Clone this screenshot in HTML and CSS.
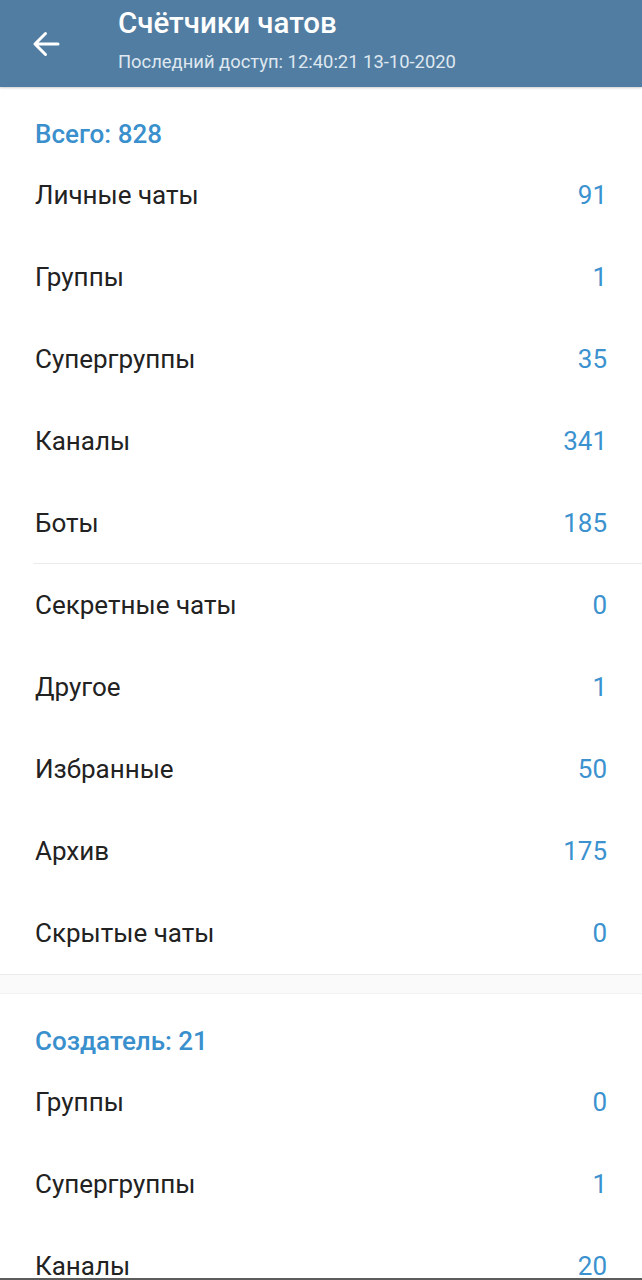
FILE: index.html
```html
<!DOCTYPE html>
<html lang="ru">
<head>
    <meta charset="utf-8"/>
    <title>Счётчики чатов</title>
    <link rel="stylesheet" href="styles.css">
</head>
<body>
<div class="screen">
    <div class="topBar">
        <div class="backButton">
            <svg width="30" height="30" viewBox="0 0 30 30">
                <path d="M27 15H4M4 15L14.5 4.5M4 15L14.5 25.5" fill="none" stroke="#ffffff" stroke-width="3" stroke-linecap="round" stroke-linejoin="round"/>
            </svg>
        </div>
        <div class="titles">
            <div class="title">Счётчики чатов</div>
            <div class="subtitle">Последний доступ: 12:40:21 13-10-2020</div>
        </div>
    </div>

    <div class="section">
        <div class="sectionTitle">Всего: 828</div>
        <div class="row"><span>Личные чаты</span><span class="value">91</span></div>
        <div class="row"><span>Группы</span><span class="value">1</span></div>
        <div class="row"><span>Супергруппы</span><span class="value">35</span></div>
        <div class="row"><span>Каналы</span><span class="value">341</span></div>
        <div class="row"><span>Боты</span><span class="value">185</span></div>
        <div class="divider"></div>
        <div class="row"><span>Секретные чаты</span><span class="value">0</span></div>
        <div class="row"><span>Другое</span><span class="value">1</span></div>
        <div class="row"><span>Избранные</span><span class="value">50</span></div>
        <div class="row"><span>Архив</span><span class="value">175</span></div>
        <div class="row"><span>Скрытые чаты</span><span class="value">0</span></div>
    </div>

    <div class="sectionGap"></div>

    <div class="section">
        <div class="sectionTitle">Создатель: 21</div>
        <div class="row"><span>Группы</span><span class="value">0</span></div>
        <div class="row"><span>Супергруппы</span><span class="value">1</span></div>
        <div class="row"><span>Каналы</span><span class="value">20</span></div>
        <div class="row"><span>Боты</span><span class="value">0</span></div>
    </div>
</div>
</body>
</html>
```

FILE: styles.css
```css
body{
    margin: 0;
    background: #ffffff;
    font-family: Roboto, "Noto Sans", sans-serif;
}
.screen{
    height: 1280px;
    overflow: hidden;
    box-sizing: border-box;
    border-bottom: 2px solid #5c5c5c;
    background: #ffffff;
}
.topBar{
    height: 87px;
    background: #517da2;
    display: flex;
    align-items: center;
    box-shadow: 0 1px 2px rgba(0, 0, 0, 0.2);
    position: relative;
}
.backButton{
    width: 118px;
    display: flex;
    padding-left: 31px;
    box-sizing: border-box;
}
.titles{
    display: flex;
    flex-direction: column;
    padding-bottom: 7px;
}
.title{
    color: #ffffff;
    font-size: 29.5px;
    font-weight: 500;
    line-height: 30px;
}
.subtitle{
    color: #dfe8f0;
    font-size: 18.4px;
    line-height: 20px;
    margin-top: 14px;
}
.section{
    padding-top: 33px;
}
.sectionTitle{
    color: #3a8fcd;
    font-size: 26px;
    font-weight: 500;
    line-height: 28px;
    padding-left: 35px;
    padding-bottom: 6px;
}
.row{
    height: 82px;
    display: flex;
    align-items: center;
    justify-content: space-between;
    padding: 0 35px;
    font-size: 26px;
    color: #222222;
}
.value{
    color: #3b92cf;
}
.divider{
    height: 1px;
    margin-left: 33px;
    margin-top: -1px;
    background: #ebebeb;
}
.sectionGap{
    height: 18px;
    background: #fafafa;
    border-top: 1px solid #ececec;
    border-bottom: 1px solid #f2f2f2;
}
```
